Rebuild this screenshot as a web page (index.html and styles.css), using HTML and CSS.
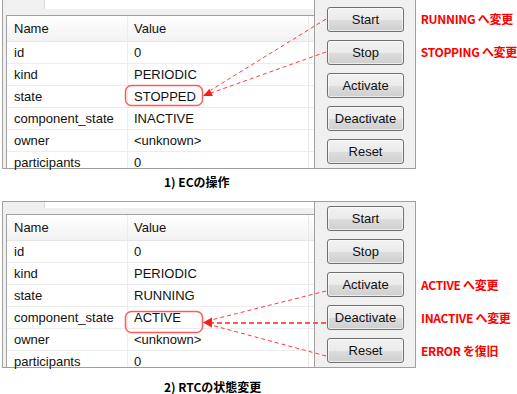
FILE: index.html
```html
<!DOCTYPE html>
<html lang="ja">
<head>
    <meta charset="UTF-8">
    <title>EC / RTC 操作</title>
    <link rel="stylesheet" href="styles.css">
</head>
<body>
    <div class="figure fig-ec">
        <div class="row">
            <div class="panel panel-cut">
                <div class="left">
                    <div class="tabs"></div>
                    <div class="grid">
                        <div class="head"><span class="c-name">Name</span><span class="c-value">Value</span><span class="c-end"></span></div>
                        <div class="line"><span class="c-name">id</span><span class="c-value">0</span><span class="c-end"></span></div>
                        <div class="line"><span class="c-name">kind</span><span class="c-value">PERIODIC</span><span class="c-end"></span></div>
                        <div class="line"><span class="c-name">state</span><span class="c-value">STOPPED</span><span class="c-end"></span></div>
                        <div class="line"><span class="c-name">component_state</span><span class="c-value">INACTIVE</span><span class="c-end"></span></div>
                        <div class="line"><span class="c-name">owner</span><span class="c-value">&lt;unknown&gt;</span><span class="c-end"></span></div>
                        <div class="line last"><span class="c-name">participants</span><span class="c-value">0</span><span class="c-end"></span></div>
                    </div>
                </div>
                <div class="buttons">
                    <button>Start</button>
                    <button>Stop</button>
                    <button>Activate</button>
                    <button>Deactivate</button>
                    <button>Reset</button>
                </div>
            </div>
            <div class="notes">
                <span>RUNNING へ変更</span>
                <span>STOPPING へ変更</span>
            </div>
        </div>
        <div class="caption">1) ECの操作</div>
        <svg class="marks" width="517" height="195" viewBox="0 0 517 195">
            <rect x="125.5" y="85.5" width="77" height="20" rx="6" ry="6" class="box"/>
            <line x1="326" y1="19" x2="211" y2="90" class="dash"/>
            <line x1="326" y1="52" x2="211" y2="93" class="dash"/>
            <polygon points="203,96 209.6,88.7 212.8,95.9" class="head-arrow"/>
        </svg>
    </div>

    <div class="figure fig-rtc">
        <div class="row">
            <div class="panel">
                <div class="left">
                    <div class="tabs"></div>
                    <div class="grid">
                        <div class="head"><span class="c-name">Name</span><span class="c-value">Value</span><span class="c-end"></span></div>
                        <div class="line"><span class="c-name">id</span><span class="c-value">0</span><span class="c-end"></span></div>
                        <div class="line"><span class="c-name">kind</span><span class="c-value">PERIODIC</span><span class="c-end"></span></div>
                        <div class="line"><span class="c-name">state</span><span class="c-value">RUNNING</span><span class="c-end"></span></div>
                        <div class="line"><span class="c-name">component_state</span><span class="c-value">ACTIVE</span><span class="c-end"></span></div>
                        <div class="line"><span class="c-name">owner</span><span class="c-value">&lt;unknown&gt;</span><span class="c-end"></span></div>
                        <div class="line last"><span class="c-name">participants</span><span class="c-value">0</span><span class="c-end"></span></div>
                    </div>
                </div>
                <div class="buttons">
                    <button>Start</button>
                    <button>Stop</button>
                    <button>Activate</button>
                    <button>Deactivate</button>
                    <button>Reset</button>
                </div>
            </div>
            <div class="notes">
                <span></span>
                <span></span>
                <span>ACTIVE へ変更</span>
                <span>INACTIVE へ変更</span>
                <span>ERROR を復旧</span>
            </div>
        </div>
        <div class="caption">2) RTCの状態変更</div>
        <svg class="marks" width="517" height="199" viewBox="0 0 517 199">
            <rect x="125.5" y="110.5" width="77" height="21" rx="6" ry="6" class="box"/>
            <line x1="326" y1="90" x2="211" y2="119" class="dash"/>
            <line x1="326" y1="122" x2="211" y2="122" class="dash thick"/>
            <line x1="326" y1="155" x2="211" y2="124" class="dash"/>
            <polygon points="203,121.5 212,116.5 212,126.5" class="head-arrow"/>
        </svg>
    </div>
</body>
</html>
```

FILE: styles.css
```css
body {
    margin: 0;
    background: #fff;
    font-family: "Liberation Sans", Arial, sans-serif;
    font-size: 13px;
    color: #111;
    width: 517px;
    height: 394px;
    overflow: hidden;
}
.figure {
    position: relative;
}
.fig-rtc {
    margin-top: 6px;
}
.row {
    display: flex;
    align-items: flex-start;
}
.panel {
    display: flex;
    margin-left: 2px;
    width: 412px;
    height: 165px;
    border: 1px solid #a0a0a0;
    background: #f0f0f0;
}
.panel-cut {
    border-top: none;
    height: 168px;
}
.left {
    display: flex;
    flex-direction: column;
    width: 311px;
    border-right: 1px solid #a0a0a0;
}
.tabs {
    height: 6px;
    margin-left: 41px;
    margin-bottom: 6px;
    background: #fff;
    border-left: 1px solid #dadada;
}
.panel-cut .tabs {
    height: 9px;
}
.grid {
    flex: 1;
    margin-left: 3px;
    border-left: 1px solid #a0a0a0;
    border-top: 1px solid #a0a0a0;
    background: #fff;
}
.head,
.line {
    display: flex;
    height: 21px;
    line-height: 21px;
    border-bottom: 1px solid #ececec;
}
.line.last {
    height: 16px;
    border-bottom: none;
}
.head {
    height: 25px;
    line-height: 25px;
    background: linear-gradient(#fff, #f2f2f2);
    border-bottom-color: #e6e6e6;
}
.c-name {
    width: 113px;
    padding-left: 7px;
    border-right: 1px solid #ececec;
    white-space: nowrap;
}
.c-value {
    width: 174px;
    padding-left: 6px;
    border-right: 1px solid #e8e8e8;
    white-space: nowrap;
}
.c-end {
    flex: 1;
}
.buttons {
    display: flex;
    flex-direction: column;
    gap: 8px;
    padding: 4px 0 0 12px;
}
.panel-cut .buttons {
    padding-top: 7px;
}
button {
    width: 77px;
    height: 25px;
    padding: 0;
    font-family: "Liberation Sans", Arial, sans-serif;
    font-size: 13px;
    color: #111;
    border: 1px solid #707070;
    border-radius: 3px;
    background: linear-gradient(#f2f2f2 0%, #ebebeb 50%, #dddddd 51%, #cfcfcf 100%);
    box-shadow: inset 0 0 0 1px rgba(255, 255, 255, 0.6);
}
.notes {
    display: flex;
    flex-direction: column;
    gap: 8px;
    margin-left: 5px;
    padding-top: 6px;
    font-family: "Noto Sans CJK JP", sans-serif;
    font-weight: bold;
    font-size: 12px;
    letter-spacing: -0.3px;
    color: #ff0000;
    white-space: nowrap;
}
.fig-rtc .notes {
    padding-top: 5px;
}
.notes span {
    height: 25px;
    line-height: 25px;
}
.caption {
    height: 26px;
    line-height: 26px;
    padding-left: 164px;
    font-family: "Noto Sans CJK JP", sans-serif;
    font-weight: bold;
    font-size: 12px;
    color: #000;
}
.fig-rtc .caption {
    height: 14px;
    line-height: 14px;
    margin-top: 12px;
}
.marks {
    position: absolute;
    top: 0;
    left: 0;
    pointer-events: none;
}
.box {
    fill: none;
    stroke: #ff5a5a;
    stroke-width: 1.5;
}
.dash {
    stroke: #ff3c3c;
    stroke-width: 1;
    stroke-dasharray: 4 3;
}
.dash.thick {
    stroke: #ff5a5a;
    stroke-width: 2;
    stroke-dasharray: 5 3;
}
.head-arrow {
    fill: #ff1a1a;
}
```
